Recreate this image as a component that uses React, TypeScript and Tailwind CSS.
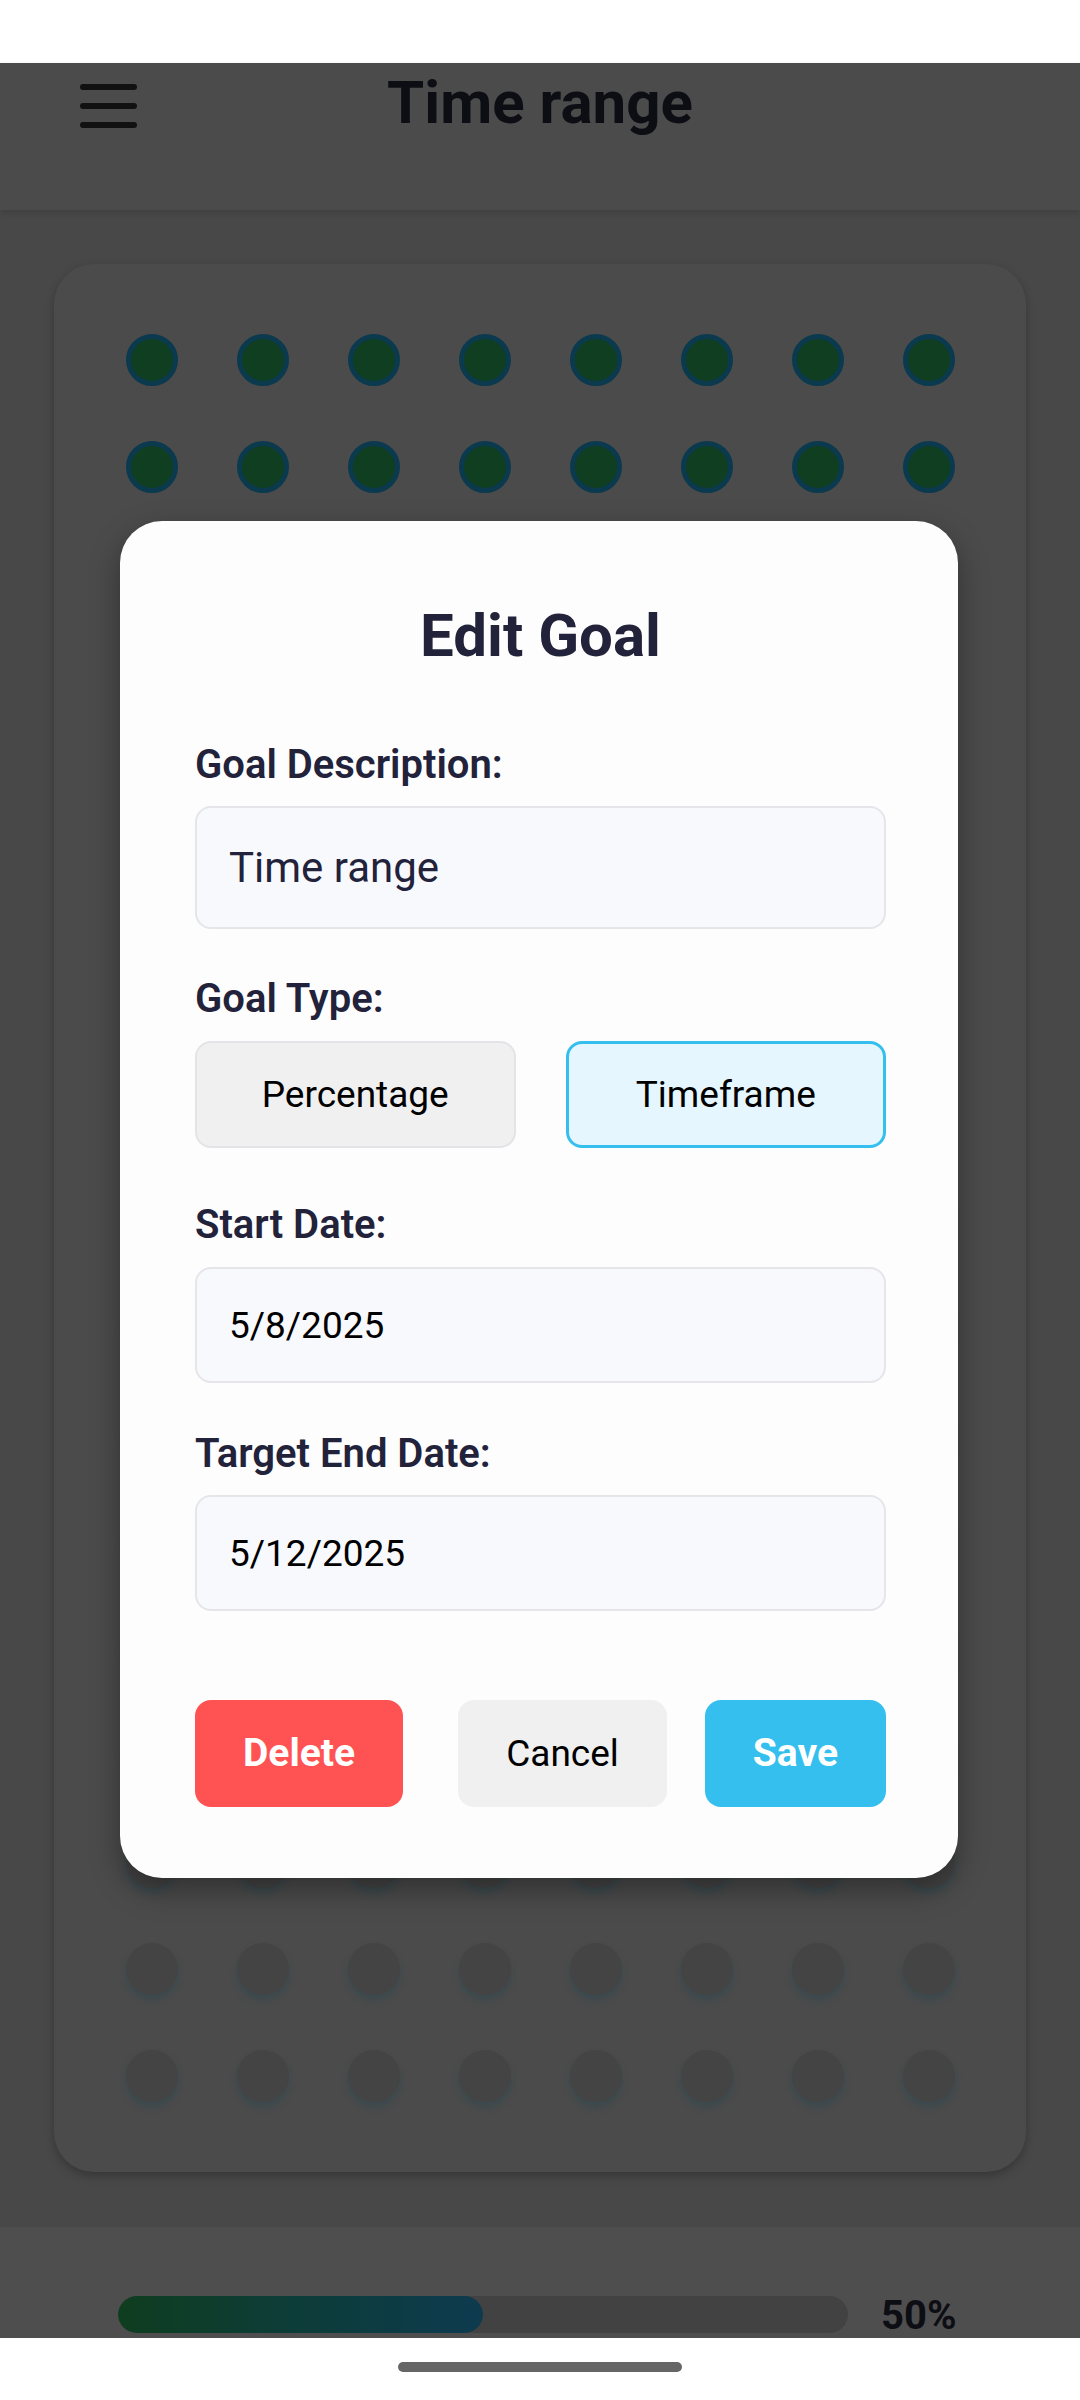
import React, { useState } from 'react';

const ROWS = 17;
const COLS = 8;
const FILLED = 68; // 50% of the dots

const Dot: React.FC<{ filled: boolean }> = ({ filled }) =>
  filled ? (
    <div className="w-[52px] h-[52px] rounded-full bg-[#103e20] border-[5px] border-[#0b3a4f]" />
  ) : (
    <div className="w-[52px] h-[52px] rounded-full bg-[#444444] shadow-[0_5px_7px_rgba(20,70,85,0.3)]" />
  );

const Label: React.FC<{ children: React.ReactNode; className?: string }> = ({ children, className }) => (
  <div className={`text-[40px] leading-[46px] font-semibold text-[#22223b] ${className ?? ''}`}>{children}</div>
);

export default function App() {
  const [goalType, setGoalType] = useState<'percentage' | 'timeframe'>('timeframe');

  return (
    <div className="relative w-[1080px] h-[2400px] overflow-hidden flex flex-col bg-[#484848] font-['Roboto',sans-serif]">
      {/* status bar */}
      <div className="h-[63px] shrink-0 bg-white" />

      {/* header */}
      <div className="relative z-10 h-[147px] shrink-0 bg-[#4b4b4b] shadow-[0_3px_6px_rgba(0,0,0,0.12)] flex items-start justify-center">
        <button className="absolute left-[80px] top-[21px] w-[57px] flex flex-col gap-[13px]">
          <span className="h-[6px] rounded-full bg-[#111111]" />
          <span className="h-[6px] rounded-full bg-[#111111]" />
          <span className="h-[6px] rounded-full bg-[#111111]" />
        </button>
        <h1 className="mt-[6px] text-[60px] leading-[68px] font-bold text-[#0d0d14]">Time range</h1>
      </div>

      {/* grid card */}
      <div className="p-[54px] shrink-0">
        <div className="h-[1908px] rounded-[40px] bg-[#4b4b4b] shadow-[0_4px_10px_rgba(0,0,0,0.25)] pl-[72px] pr-[71px] py-[70px] flex flex-col justify-between">
          {Array.from({ length: ROWS }).map((_, r) => (
            <div key={r} className="flex justify-between">
              {Array.from({ length: COLS }).map((_, c) => (
                <Dot key={c} filled={r * COLS + c < FILLED} />
              ))}
            </div>
          ))}
        </div>
      </div>

      {/* footer with progress */}
      <div className="flex-1 bg-[#4e4e4e] border-t border-[#464646] pt-[69px] pl-[118px] flex items-start">
        <div className="w-[730px] h-[37px] rounded-full bg-[#424242] overflow-hidden">
          <div className="h-full w-1/2 rounded-full bg-gradient-to-r from-[#0f3d1f] to-[#0e3a4f]" />
        </div>
        <span className="ml-[33px] -mt-[2px] text-[40px] leading-[44px] font-bold text-[#0d0d14]">50%</span>
      </div>

      {/* nav bar */}
      <div className="h-[63px] shrink-0 bg-white flex items-center justify-center">
        <div className="w-[284px] h-[10px] rounded-full bg-[#666666] -mt-[6px]" />
      </div>

      {/* modal */}
      <div className="absolute left-[120px] top-[521px] w-[838px] rounded-[42px] bg-[#fdfdfd] shadow-[0_12px_30px_rgba(0,0,0,0.35)] pt-[81px] pb-[71px] pl-[75px] pr-[72px] flex flex-col">
        <h2 className="text-[60px] leading-[68px] font-bold text-center text-[#22223b]">Edit Goal</h2>

        <Label className="mt-[72px]">Goal Description:</Label>
        <input
          readOnly
          defaultValue="Time range"
          className="mt-[18px] h-[123px] w-full rounded-[16px] border-2 border-[#e5e5ea] bg-[#f8f9fd] pl-[32px] text-[42px] text-[#22223b] outline-none"
        />

        <Label className="mt-[47px]">Goal Type:</Label>
        <div className="mt-[19px] grid grid-cols-2 gap-[50px]">
          <button
            onClick={() => setGoalType('percentage')}
            className={`h-[107px] rounded-[16px] text-[37px] text-black ${
              goalType === 'percentage' ? 'border-[3px] border-[#35bfee] bg-[#e5f6fe]' : 'border-2 border-[#e4e4e8] bg-[#f0f0f0]'
            }`}
          >
            Percentage
          </button>
          <button
            onClick={() => setGoalType('timeframe')}
            className={`h-[107px] rounded-[16px] text-[37px] text-black ${
              goalType === 'timeframe' ? 'border-[3px] border-[#35bfee] bg-[#e5f6fe]' : 'border-2 border-[#e4e4e8] bg-[#f0f0f0]'
            }`}
          >
            Timeframe
          </button>
        </div>

        <Label className="mt-[54px]">Start Date:</Label>
        <input
          readOnly
          defaultValue="5/8/2025"
          className="mt-[19px] h-[116px] w-full rounded-[16px] border-2 border-[#e5e5ea] bg-[#f8f9fd] pl-[32px] text-[37px] text-black outline-none"
        />

        <Label className="mt-[48px]">Target End Date:</Label>
        <input
          readOnly
          defaultValue="5/12/2025"
          className="mt-[18px] h-[116px] w-full rounded-[16px] border-2 border-[#e5e5ea] bg-[#f8f9fd] pl-[32px] text-[37px] text-black outline-none"
        />

        <div className="mt-[89px] flex items-center justify-between">
          <button className="h-[107px] px-[48px] rounded-[16px] bg-[#ff5252] text-white font-bold text-[39px]">Delete</button>
          <div className="flex gap-[38px]">
            <button className="h-[107px] px-[48px] rounded-[16px] bg-[#f0f0f0] text-black text-[37px]">Cancel</button>
            <button className="h-[107px] px-[48px] rounded-[16px] bg-[#35bfee] text-white font-bold text-[39px]">Save</button>
          </div>
        </div>
      </div>
    </div>
  );
}
